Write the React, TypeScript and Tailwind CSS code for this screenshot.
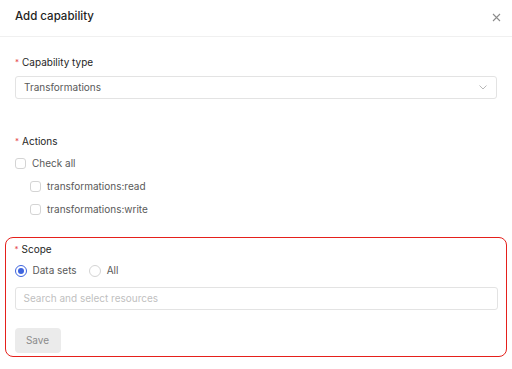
import React, { useState } from "react";

const font = { fontFamily: "Inter, 'Noto Sans', sans-serif" };

function Label({ text }: { text: string }) {
	return (
		<div className="flex h-4 items-center text-[10px] leading-4 text-[#262626]">
			<span className="mr-[3px] text-[8px] text-[#e5484d]">*</span>
			{text}
		</div>
	);
}

function Check({ label, indent }: { label: string; indent?: boolean }) {
	return (
		<div className={`flex h-4 items-center gap-[6px] ${indent ? "pl-[15px]" : ""}`}>
			<span className="h-[11px] w-[11px] rounded-[3px] border border-[#d4d4d4] bg-white" />
			<span className="text-[10px] text-[#595959]">{label}</span>
		</div>
	);
}

function Radio({ label, checked }: { label: string; checked?: boolean }) {
	return (
		<div className="flex h-4 items-center gap-[6px]">
			<span
				className={`flex h-[12px] w-[12px] items-center justify-center rounded-full border bg-white ${
					checked ? "border-[#3e64de]" : "border-[#d4d4d4]"
				}`}
			>
				{checked && <span className="h-[6px] w-[6px] rounded-full bg-[#3e64de]" />}
			</span>
			<span className="text-[10px] text-[#595959]">{label}</span>
		</div>
	);
}

export default function App() {
	const [scope] = useState("datasets");

	return (
		<div className="h-[369px] w-[512px] overflow-hidden bg-white" style={font}>
			{/* Header */}
			<div className="flex h-[37px] items-center justify-between border-b border-[#f0f0f0] pb-[3px] pl-[15px] pr-[11px]">
				<h1 className="text-[11.5px] font-medium text-[#1f1f1f]">Add capability</h1>
				<svg width="9" height="9" viewBox="0 0 9 9" className="mt-[1px]">
					<path d="M1 1L8 8M8 1L1 8" stroke="#8c8c8c" strokeWidth="1.1" />
				</svg>
			</div>

			<div className="px-[15px] pt-[17px]">
				{/* Capability type */}
				<Label text="Capability type" />
				<div className="mt-[6px] flex h-[23px] items-center justify-between rounded-[3px] border border-[#e3e3e3] pl-[8px] pr-[9px]">
					<span className="text-[10px] text-[#595959]">Transformations</span>
					<svg width="8" height="5" viewBox="0 0 8 5">
						<path d="M0.5 0.5L4 4L7.5 0.5" fill="none" stroke="#b0b0b0" strokeWidth="0.9" />
					</svg>
				</div>

				{/* Actions */}
				<div className="mt-[34px]">
					<Label text="Actions" />
				</div>
				<div className="mt-[6px] flex flex-col gap-[7px]">
					<Check label="Check all" />
					<Check label="transformations:read" indent />
					<Check label="transformations:write" indent />
				</div>
			</div>

			{/* Scope (highlighted) */}
			<div className="mx-[5px] mt-[20px] rounded-[8px] border-[1.5px] border-[#e5201b] px-[8.5px] pb-[3px] pt-[2.5px]">
				<Label text="Scope" />
				<div className="mt-[6px] flex items-center gap-[12px]">
					<Radio label="Data sets" checked={scope === "datasets"} />
					<Radio label="All" checked={scope === "all"} />
				</div>
				<div className="mt-[8px] flex h-[23px] items-center rounded-[3px] border border-[#e3e3e3] pl-[8px]">
					<span className="text-[10px] text-[#bfbfbf]">Search and select resources</span>
				</div>
				<button className="mt-[18px] flex h-[25px] w-[46px] items-center justify-center rounded-[4px] bg-[#ebebeb] text-[10px] text-[#8c8c8c]">
					Save
				</button>
			</div>
		</div>
	);
}
